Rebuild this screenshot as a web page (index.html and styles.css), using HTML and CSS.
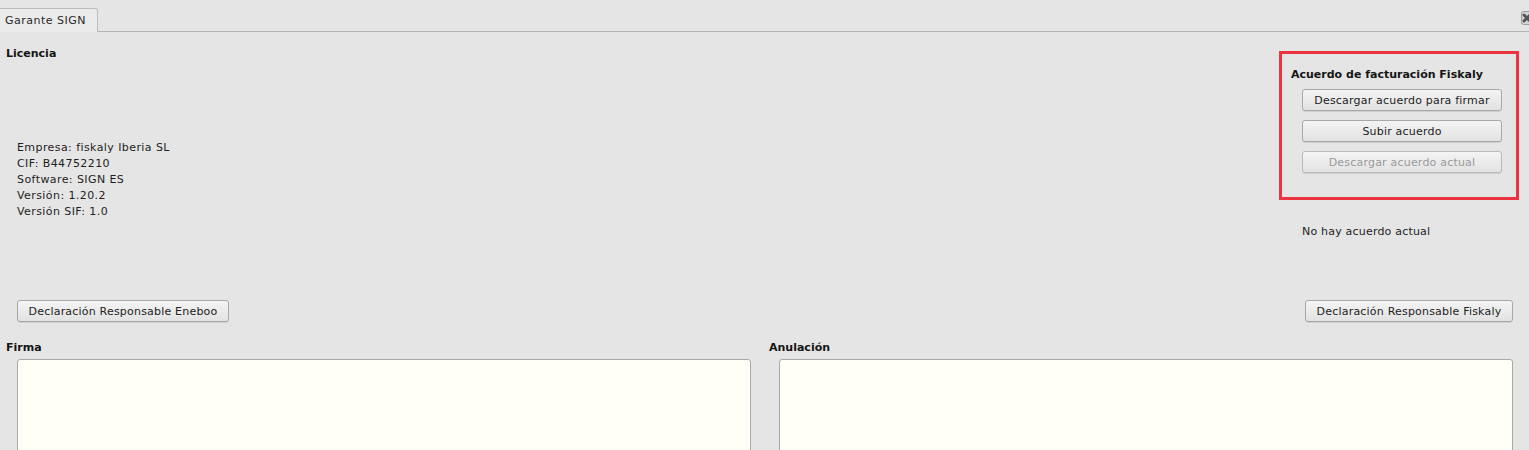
FILE: index.html
```html
<!DOCTYPE html>
<html>
<head>
<meta charset="utf-8">
<link rel="stylesheet" href="styles.css">
</head>
<body>
<div class="app">
  <div class="tabbar">
    <div class="tab">Garante SIGN</div>
    <div class="tabline"></div>
    <div class="close">
      <svg width="12" height="14" viewBox="0 0 12 14"><rect x="0.5" y="0.5" width="11" height="13" rx="2" fill="#d4d4d4" stroke="#9a9a9a"/><path d="M3 4 L9 10 M9 4 L3 10" stroke="#555" stroke-width="3" stroke-linecap="round"/></svg>
    </div>
  </div>
  <div class="top">
    <div class="licencia">
      <div class="title">Licencia</div>
      <div class="info">
        <div>Empresa: fiskaly Iberia SL</div>
        <div>CIF: B44752210</div>
        <div>Software: SIGN ES</div>
        <div>Versión: 1.20.2</div>
        <div>Versión SIF: 1.0</div>
      </div>
      <button class="btn decl-left">Declaración Responsable Eneboo</button>
    </div>
    <div class="acuerdo">
      <div class="redbox">
        <div class="title">Acuerdo de facturación Fiskaly</div>
        <div class="btns">
          <button class="btn wide">Descargar acuerdo para firmar</button>
          <button class="btn wide">Subir acuerdo</button>
          <button class="btn wide disabled">Descargar acuerdo actual</button>
        </div>
      </div>
      <div class="noacuerdo">No hay acuerdo actual</div>
      <button class="btn decl-right">Declaración Responsable Fiskaly</button>
    </div>
  </div>
  <div class="bottom">
    <div class="pane">
      <div class="title">Firma</div>
      <div class="area"></div>
    </div>
    <div class="pane">
      <div class="title">Anulación</div>
      <div class="area"></div>
    </div>
  </div>
</div>
</body>
</html>
```
FILE: styles.css
```css
* { box-sizing: border-box; }
html, body { margin: 0; padding: 0; }
body {
  background: #e5e5e5;
  font-family: "DejaVu Sans", Verdana, sans-serif;
  font-size: 11px;
  color: #1e1e1e;
  width: 1529px;
  height: 450px;
  overflow: hidden;
}
.app { width: 1529px; height: 450px; overflow: hidden; }
.tabbar {
  display: flex;
  align-items: flex-end;
  height: 32px;
  padding-top: 8px;
  position: relative;
}
.tab {
  width: 98px;
  height: 24px;
  background: #ebebeb;
  border: 1px solid #bdbdbd;
  border-bottom: none;
  border-left: none;
  border-radius: 0 3px 0 0;
  padding: 5px 0 0 5px;
  letter-spacing: 0.5px;
  color: #2a2a2a;
}
.tabline {
  flex: 1;
  height: 1px;
  border-bottom: 1px solid #b4b4b4;
}
.close {
  position: absolute;
  right: -4px;
  top: 11px;
  width: 12px;
  height: 14px;
}
.close svg { display: block; }
.top {
  display: flex;
  justify-content: space-between;
  height: 309px;
}
.title { font-weight: bold; color: #151515; }
.licencia {
  padding: 15px 0 0 6px;
  display: flex;
  flex-direction: column;
}
.info {
  margin: 80px 0 0 11px;
  line-height: 16px;
  letter-spacing: 0.42px;
}
.btn {
  font-family: inherit;
  font-size: 11px;
  letter-spacing: 0.2px;
  color: #222;
  background: linear-gradient(#f4f4f4, #e2e2e2);
  border: 1px solid #a8a8a8;
  border-radius: 3px;
  height: 22px;
  padding: 0 8px;
  box-shadow: 0 1px 0 #d0d0d0;
  cursor: default;
}
.btn.disabled { color: #9a9a9a; border-color: #bababa; }
.decl-left {
  margin: 80px 0 0 11px;
  align-self: flex-start;
  width: 212px;
}
.acuerdo {
  width: 250px;
  display: flex;
  flex-direction: column;
  align-items: flex-start;
  padding-top: 19px;
}
.redbox {
  width: 240px;
  height: 149px;
  border: 3px solid #ec3440;
  padding: 14px 0 0 9px;
}
.btns {
  display: flex;
  flex-direction: column;
  gap: 9px;
  margin: 8px 0 0 11px;
}
.btn.wide { width: 200px; }
.noacuerdo { margin: 25px 0 0 23px; letter-spacing: 0.2px; }
.decl-right {
  margin: 62px 0 0 26px;
  width: 208px;
}
.bottom {
  display: grid;
  grid-template-columns: 745px 744px;
  column-gap: 18px;
  padding: 0 0 0 6px;
}
.pane { display: flex; flex-direction: column; }
.pane .title { height: 18px; }
.area {
  margin-left: 11px;
  height: 120px;
  background: #fffff7;
  border: 1px solid #a9a9a9;
  border-radius: 3px;
}
.pane + .pane .area { margin-left: 10px; }
```
